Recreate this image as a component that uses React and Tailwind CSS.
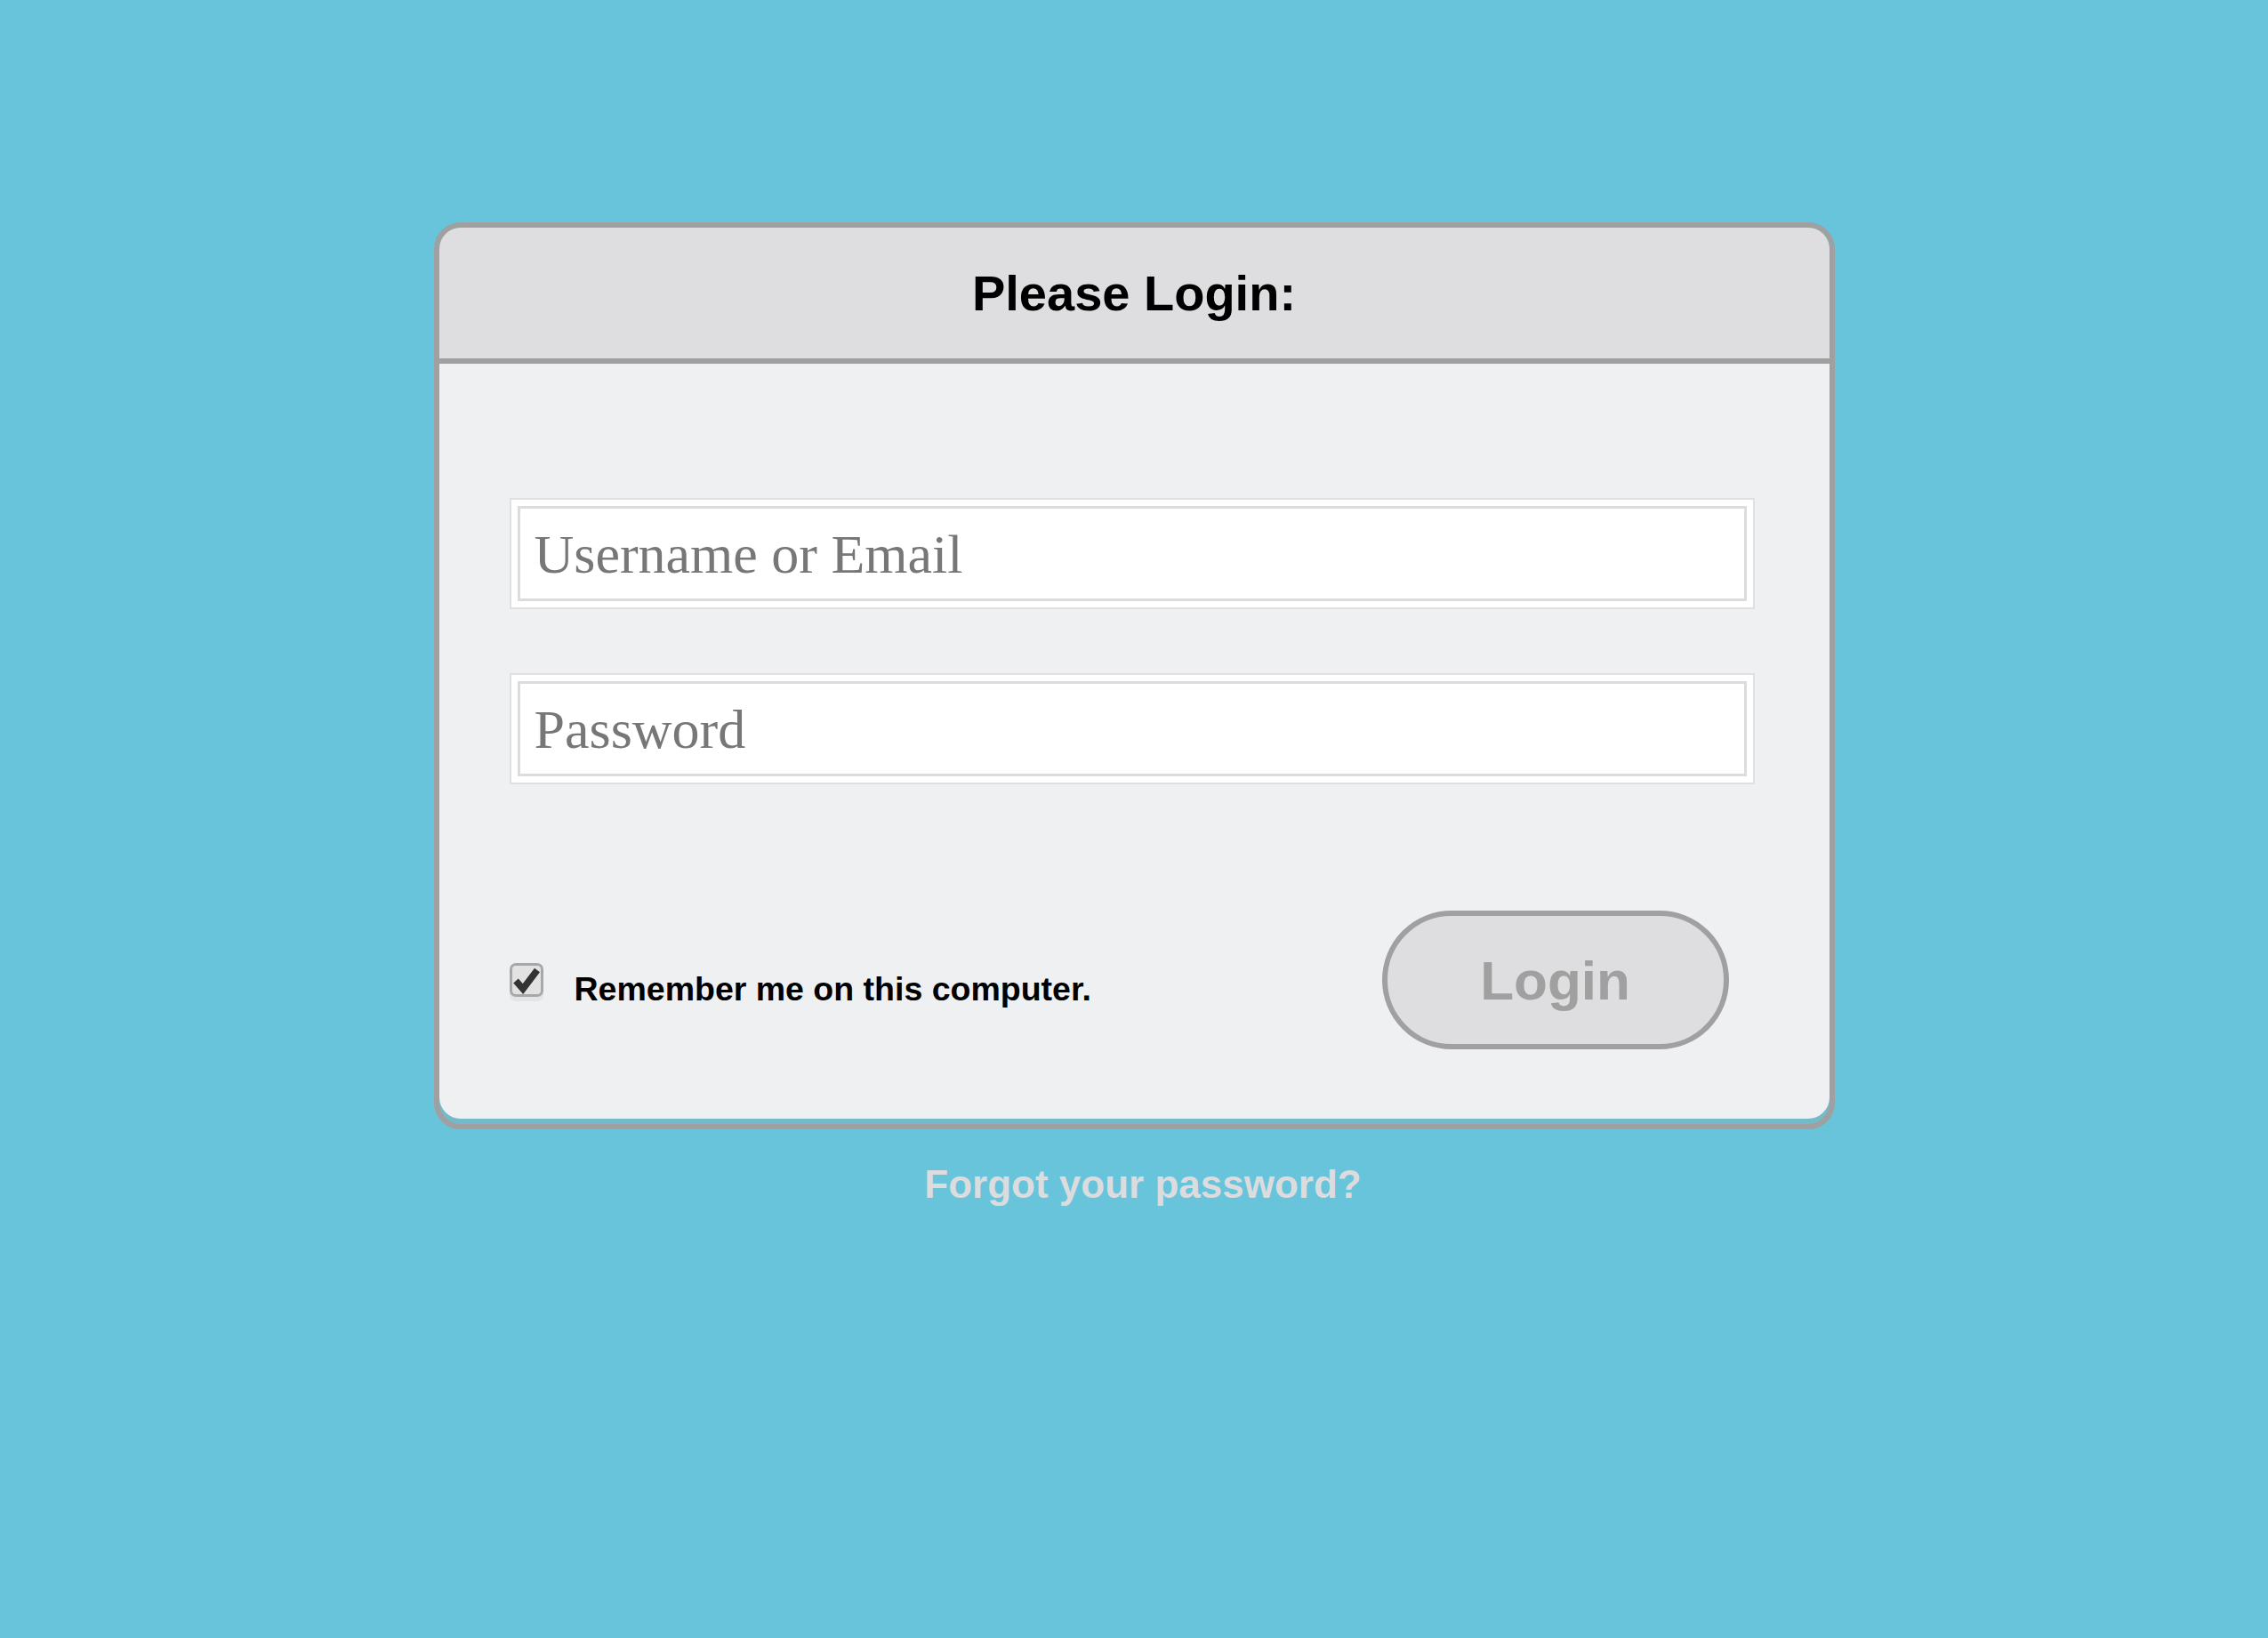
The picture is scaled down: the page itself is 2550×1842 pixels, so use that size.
const sans = { fontFamily: '"Liberation Sans", Arial, sans-serif' };

const Field = ({ placeholder, type = "text" }) => (
  <div className="h-[125px] border-2 border-[#e0e0e2] bg-white p-[7px]">
    <input
      type={type}
      placeholder={placeholder}
      className="h-full w-full border-[3px] border-[#dcdcdc] bg-white px-[16px] pt-[2px] text-[62px] text-[#777] outline-none placeholder:text-[#777] font-['Liberation_Serif',serif]"
    />
  </div>
);

const CheckBox = () => (
  <div className="flex h-[38px] w-[38px] items-center justify-center rounded-[7px] border-[3px] border-[#a8a8a8] bg-[#e2e2e2] shadow-[0_5px_0_#e4e4e6]">
    <svg viewBox="0 0 32 32" className="h-[32px] w-[32px]">
      <polyline points="4,17 12,26 28,5" fill="none" stroke="#333" strokeWidth="7.5" />
    </svg>
  </div>
);

export default function App() {
  return (
    <div className="min-h-[1842px] w-full bg-[#67c4db] pt-[250px]" style={sans}>
      <div className="mx-auto w-[1575px] overflow-hidden rounded-[30px] border-[6px] border-[#a0a0a0] bg-[#74bbca]">
        <div className="flex h-[153px] items-center justify-center border-b-[6px] border-[#a0a0a0] bg-[#dedee0]">
          <h1 className="text-[56px] font-bold text-black">Please Login:</h1>
        </div>

        <div className="mb-[6px] rounded-b-[24px] bg-[#eff0f2] pb-[78px] pt-[151px]">
          <div className="flex flex-col gap-[72px] pl-[79px] pr-[84px]">
            <Field placeholder="Username or Email" />
            <Field placeholder="Password" type="password" />
          </div>

          <div className="mt-[142px] flex items-center justify-between pl-[79px] pr-[113px]">
            <label className="flex items-center gap-[35px]">
              <CheckBox />
              <span className="mt-[20px] text-[37.5px] font-bold text-black">Remember me on this computer.</span>
            </label>
            <button className="h-[156px] w-[390px] rounded-full border-[6px] border-[#a0a0a0] bg-[#dedee0] text-[62px] font-bold text-[#a0a0a0]">
              Login
            </button>
          </div>
        </div>
      </div>

      <div className="mt-[29px] flex justify-center pl-[20px]">
        <a className="text-[44px] font-bold text-[#dcdcde]">Forgot your password?</a>
      </div>
    </div>
  );
}
